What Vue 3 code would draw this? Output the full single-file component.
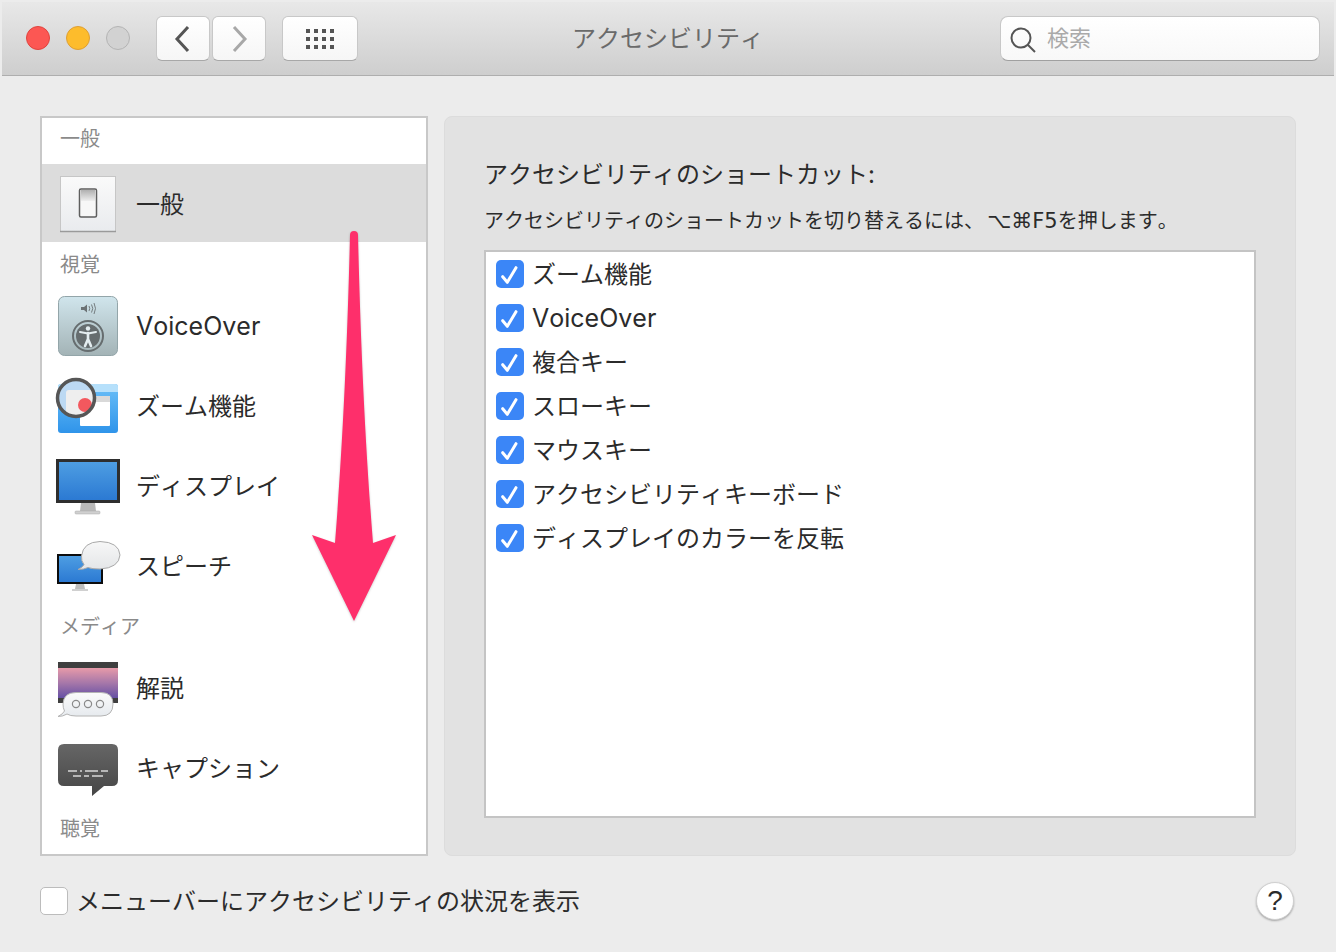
<template>
  <div class="win">
    <header class="toolbar">
      <div class="lights">
        <span class="light red"></span>
        <span class="light yellow"></span>
        <span class="light gray"></span>
      </div>
      <div class="nav">
        <div class="tbtn nav-btn">
          <svg width="20" height="30" viewBox="0 0 20 30"><path d="M15 3 L4 15 L15 27" fill="none" stroke="#555" stroke-width="3"/></svg>
        </div>
        <div class="tbtn nav-btn">
          <svg width="20" height="30" viewBox="0 0 20 30"><path d="M5 3 L16 15 L5 27" fill="none" stroke="#a8a8a8" stroke-width="3"/></svg>
        </div>
      </div>
      <div class="tbtn grid-btn">
        <div class="dots">
          <span v-for="n in 12" :key="n" class="dot"></span>
        </div>
      </div>
      <div class="title">アクセシビリティ</div>
      <div class="search">
        <svg width="28" height="28" viewBox="0 0 28 28"><circle cx="12" cy="13" r="9.5" fill="none" stroke="#555" stroke-width="2"/><path d="M19 20 L26 27" stroke="#555" stroke-width="2"/></svg>
        <span>検索</span>
      </div>
    </header>

    <main class="content">
      <aside class="sidebar">
        <template v-for="(item, i) in sidebar" :key="i">
          <div v-if="item.section" class="section" :class="item.section">{{ item.label }}</div>
          <div v-else class="row" :class="{ selected: item.selected }">
            <svg class="icon" width="68" height="68" viewBox="0 0 68 68">
              <template v-if="item.icon === 'switch'">
                <defs>
                  <linearGradient id="sw" x1="0" y1="0" x2="0" y2="1"><stop offset="0" stop-color="#fafafa"/><stop offset="1" stop-color="#e9ebee"/></linearGradient>
                  <linearGradient id="swt" x1="0" y1="0" x2="0" y2="1"><stop offset="0" stop-color="#b0b0b0"/><stop offset="1" stop-color="#eeeeee"/></linearGradient>
                </defs>
                <rect x="6.5" y="6.5" width="55" height="55" fill="url(#sw)" stroke="#c6c6c6"/>
                <path d="M6 61.5 H62" stroke="#9a9a9a" stroke-width="1.5"/>
                <rect x="25.5" y="19" width="17" height="28" rx="1.5" fill="#f7f7f7" stroke="#5e5e5e" stroke-width="1.5"/>
                <rect x="27" y="20" width="14" height="11" fill="url(#swt)"/>
              </template>
              <template v-else-if="item.icon === 'voiceover'">
                <defs><linearGradient id="vo" x1="0" y1="0" x2="0" y2="1"><stop offset="0" stop-color="#d0e5ec"/><stop offset="1" stop-color="#a3b3b6"/></linearGradient></defs>
                <rect x="4.5" y="4.5" width="59" height="59" rx="6" fill="url(#vo)" stroke="#93a5a9"/>
                <path d="M27 15 H30 L33 12.5 V20.5 L30 18 H27 Z" fill="#6b7274"/>
                <path d="M35 14 Q36.5 16.5 35 19 M37.5 12.5 Q40 16.5 37.5 20.5 M40 11 Q43 16.5 40 22" fill="none" stroke="#6b7274" stroke-width="0.9"/>
                <circle cx="34" cy="44" r="15" fill="none" stroke="#666d6f" stroke-width="2"/>
                <circle cx="34" cy="44" r="12" fill="#666d6f"/>
                <circle cx="34" cy="36.5" r="2.2" fill="#e4edf0"/>
                <path d="M26 40 L34 41.5 L42 40" fill="none" stroke="#e4edf0" stroke-width="2" stroke-linecap="round" stroke-linejoin="round"/>
                <path d="M34 41 V47 M34 47 L31 54 M34 47 L37 54" fill="none" stroke="#e4edf0" stroke-width="2.6" stroke-linecap="round"/>
              </template>
              <template v-else-if="item.icon === 'zoom'">
                <defs>
                  <linearGradient id="zm" x1="0" y1="0" x2="0" y2="1"><stop offset="0" stop-color="#6cc0f8"/><stop offset="1" stop-color="#2f94ea"/></linearGradient>
                  <clipPath id="lens"><circle cx="22" cy="26" r="18.5"/></clipPath>
                </defs>
                <rect x="4" y="12" width="60" height="49" rx="3" fill="url(#zm)"/>
                <path d="M4 20 V15 Q4 12 7 12 H61 Q64 12 64 15 V20 Z" fill="#b6e0fb"/>
                <rect x="26" y="24" width="30" height="30" rx="1" fill="#fff"/>
                <rect x="26" y="24" width="30" height="6" fill="#d9d9d9"/>
                <g clip-path="url(#lens)">
                  <circle cx="22" cy="26" r="18.5" fill="#bcd9f3"/>
                  <rect x="12" y="18" width="30" height="30" rx="3" fill="#eee"/>
                  <circle cx="31" cy="33" r="7" fill="#f3585e"/>
                </g>
                <circle cx="22" cy="26" r="18.5" fill="none" stroke="#565656" stroke-width="3.5"/>
              </template>
              <template v-else-if="item.icon === 'display'">
                <defs><linearGradient id="dp" x1="0" y1="0" x2="0" y2="1"><stop offset="0" stop-color="#4f9fe3"/><stop offset="1" stop-color="#2a78d2"/></linearGradient></defs>
                <path d="M27 51 H41 L42 59 H26 Z" fill="#b9b9b9"/>
                <rect x="21" y="59" width="25" height="3" rx="1" fill="#d0d0d0" stroke="#a8a8a8" stroke-width="0.5"/>
                <rect x="3.5" y="8.5" width="61" height="41" fill="url(#dp)" stroke="#2e2e2e" stroke-width="3"/>
              </template>
              <template v-else-if="item.icon === 'speech'">
                <defs>
                  <linearGradient id="sp" x1="0" y1="0" x2="0" y2="1"><stop offset="0" stop-color="#4f9fe3"/><stop offset="1" stop-color="#2a78d2"/></linearGradient>
                  <linearGradient id="sb" x1="0" y1="0" x2="0" y2="1"><stop offset="0" stop-color="#f7f7f7"/><stop offset="1" stop-color="#e4e6e8"/></linearGradient>
                </defs>
                <path d="M22 52 H30 L31 57 H21 Z" fill="#bdbdbd"/>
                <rect x="18" y="57" width="16" height="2" fill="#d0d0d0"/>
                <rect x="4" y="23" width="44" height="28" fill="url(#sp)" stroke="#0c0c0c" stroke-width="2"/>
                <path d="M24 37.5 Q29 35 30 32.5 Q27 29 27.5 24 Q29 10 46 9.5 Q65 10 66 23 Q65 36 46 37 Q38 37 34 35.5 Q30 37.5 24 37.5 Z" fill="url(#sb)" stroke="#a9a9a9" stroke-width="1"/>
              </template>
              <template v-else-if="item.icon === 'desc'">
                <defs>
                  <linearGradient id="ds" x1="0" y1="0" x2="0" y2="1"><stop offset="0" stop-color="#e79aa9"/><stop offset="0.5" stop-color="#a677a9"/><stop offset="1" stop-color="#6550a4"/></linearGradient>
                  <linearGradient id="db" x1="0" y1="0" x2="0" y2="1"><stop offset="0" stop-color="#fbfbfb"/><stop offset="1" stop-color="#e6eaee"/></linearGradient>
                </defs>
                <rect x="4" y="8" width="60" height="41" fill="#3f3f3f"/>
                <rect x="4" y="14" width="60" height="30" fill="url(#ds)"/>
                <path d="M4 62.5 Q9 60 10.5 57 Q9 54 9 50 Q9.5 38.5 22 38.5 H47 Q59 38.5 59 50 Q59 62 47 62 H22 Q16 62 13 60 Q9 62.5 4 62.5 Z" fill="url(#db)" stroke="#b4b4b4" stroke-width="1"/>
                <circle cx="22" cy="50" r="3.6" fill="none" stroke="#8a8a8a" stroke-width="1.2"/>
                <circle cx="34" cy="50" r="3.6" fill="none" stroke="#8a8a8a" stroke-width="1.2"/>
                <circle cx="46" cy="50" r="3.6" fill="none" stroke="#8a8a8a" stroke-width="1.2"/>
              </template>
              <template v-else-if="item.icon === 'caption'">
                <defs><linearGradient id="cp" x1="0" y1="0" x2="0" y2="1"><stop offset="0" stop-color="#666"/><stop offset="1" stop-color="#464646"/></linearGradient></defs>
                <path d="M10 10 H58 Q64 10 64 16 V46 Q64 52 58 52 H50 L38 62 V52 H10 Q4 52 4 46 V16 Q4 10 10 10 Z" fill="url(#cp)"/>
                <path d="M14 37 H23 M26 37 H28 M31 37 H44 M47 37 H54 M19 42 H27 M30 42 H35 M38 42 H49" stroke="#d8d8d8" stroke-width="1.4"/>
              </template>
            </svg>
            <span class="row-label" :class="{ latin: item.latin }">{{ item.label }}</span>
          </div>
        </template>
      </aside>

      <section class="panel">
        <h2>アクセシビリティのショートカット:</h2>
        <p>アクセシビリティのショートカットを切り替えるには、<span class="keys">⌥⌘F5</span>を押します。</p>
        <div class="list">
          <div v-for="s in shortcuts" :key="s.label" class="check-row">
            <span class="check">
              <svg width="28" height="28" viewBox="0 0 28 28"><path d="M6.7 16.7 L11.3 22.3 L20 7.7" fill="none" stroke="#fff" stroke-width="3" stroke-linecap="round" stroke-linejoin="round"/></svg>
            </span>
            <span class="row-label" :class="{ latin: s.latin }">{{ s.label }}</span>
          </div>
        </div>
      </section>
    </main>

    <footer class="foot">
      <div class="menu-opt"><span class="empty-check"></span><span class="row-label">メニューバーにアクセシビリティの状況を表示</span></div>
      <div class="help">?</div>
    </footer>

    <!-- annotation drawn over the screenshot -->
    <svg class="arrow" width="1336" height="952" viewBox="0 0 1336 952">
      <path d="M350 235 Q350 231 354 231 Q358 231 358 235 C360 320 364 430 373 543 L396 535 L354 621 L312 535 L335 543 C344 430 348 320 350 235 Z" fill="#fe2f6b"/>
    </svg>
  </div>
</template>

<script setup>
const sidebar = [
  { label: '一般', section: 'first' },
  { label: '一般', icon: 'switch', selected: true },
  { label: '視覚', section: 'normal' },
  { label: 'VoiceOver', icon: 'voiceover', latin: true },
  { label: 'ズーム機能', icon: 'zoom' },
  { label: 'ディスプレイ', icon: 'display' },
  { label: 'スピーチ', icon: 'speech' },
  { label: 'メディア', section: 'tight' },
  { label: '解説', icon: 'desc' },
  { label: 'キャプション', icon: 'caption' },
  { label: '聴覚', section: 'last' }
]

const shortcuts = [
  { label: 'ズーム機能' },
  { label: 'VoiceOver', latin: true },
  { label: '複合キー' },
  { label: 'スローキー' },
  { label: 'マウスキー' },
  { label: 'アクセシビリティキーボード' },
  { label: 'ディスプレイのカラーを反転' }
]
</script>

<style>
html, body { margin: 0; background: #ececec; }
</style>

<style scoped>
.win {
  position: relative;
  width: 1336px;
  height: 952px;
  overflow: hidden;
  background: #ececec;
  color: #2b2b2b;
  font-family: Inter, "Noto Sans CJK JP", "DejaVu Sans", sans-serif;
  font-kerning: none;
}

.toolbar {
  display: flex;
  align-items: flex-start;
  box-sizing: border-box;
  height: 74px;
  margin: 2px 2px 0;
  padding: 14px 0 0 24px;
  background: linear-gradient(#e8e8e8, #cecece);
  border-bottom: 1px solid #aeaeae;
}
.lights { display: flex; gap: 16px; margin-top: 10px; }
.light { width: 24px; height: 24px; border-radius: 50%; box-sizing: border-box; }
.red { background: #fc5753; border: 1px solid #e0443e; }
.yellow { background: #fdbc2c; border: 1px solid #de9f34; }
.gray { background: #d2d2d2; border: 1px solid #b4b4b4; }

.tbtn {
  display: flex;
  align-items: center;
  justify-content: center;
  height: 45px;
  box-sizing: border-box;
  background: linear-gradient(#fff, #f6f6f6);
  border: 1px solid #c8c8c8;
  border-bottom-color: #a8a8a8;
  border-radius: 6px;
}
.nav { display: flex; gap: 2px; margin-left: 26px; }
.nav-btn { width: 54px; }
.grid-btn { width: 76px; margin-left: 16px; }
.dots {
  display: grid;
  grid-template-columns: repeat(4, 4px);
  grid-auto-rows: 4px;
  gap: 4px;
}
.dot { display: block; background: #555; }

.title {
  position: absolute;
  left: 0;
  right: 0;
  top: 23px;
  text-align: center;
  font-size: 24px;
  line-height: 32px;
  color: #6a6a6a;
}
.search {
  display: flex;
  align-items: center;
  width: 320px;
  height: 45px;
  margin-left: auto;
  margin-right: 14px;
  padding-left: 8px;
  box-sizing: border-box;
  background: linear-gradient(#fff, #f8f8f8);
  border: 1px solid #c8c8c8;
  border-bottom-color: #a0a0a0;
  border-radius: 8px;
  font-size: 22px;
  color: #aaa;
  position: relative;
}
.search span { margin-left: 10px; padding-bottom: 5px; }

.content {
  display: grid;
  grid-template-columns: 388px 852px;
  gap: 16px;
  height: 740px;
  margin: 40px 40px 0;
}

.sidebar {
  box-sizing: border-box;
  height: 740px;
  overflow: hidden;
  background: #fff;
  border: 2px solid #c8c8c8;
}
.section {
  display: flex;
  align-items: center;
  box-sizing: border-box;
  height: 44px;
  padding: 0 0 2px 18px;
  font-size: 20px;
  color: #8a8a8a;
}
.section.first { height: 46px; padding-bottom: 8px; }
.section.tight { height: 42px; padding-bottom: 3px; }
.section.last { padding-bottom: 6px; }
.row {
  display: flex;
  align-items: center;
  height: 80px;
  padding-left: 12px;
  font-size: 24px;
}
.row.selected { box-sizing: border-box; height: 78px; padding-top: 2px; background: #dcdcdc; }
.row > .row-label { margin-left: 14px; }
.row-label { padding-bottom: 3px; }
.row-label.latin { padding-bottom: 0; font-size: 25px; }
.icon { flex: none; }

.panel {
  display: flex;
  flex-direction: column;
  box-sizing: border-box;
  height: 740px;
  padding: 42px 39px 37px;
  background: #e2e2e2;
  border: 1px solid #dcdcdc;
  border-radius: 8px;
}
.panel h2 {
  margin: 0;
  font-size: 24px;
  font-weight: 400;
  line-height: 32px;
}
.panel p {
  margin: 16px 0 0;
  font-size: 20px;
  line-height: 28px;
}
.keys {
  margin-left: 3px;
  font-family: "DejaVu Sans", Inter, sans-serif;
  font-size: 21px;
}
.list {
  flex: 1;
  margin-top: 15px;
  background: #fff;
  border: 2px solid #c4c4c4;
}
.check-row {
  display: flex;
  align-items: center;
  gap: 8px;
  height: 44px;
  padding-left: 10px;
  font-size: 24px;
}
.check {
  display: block;
  width: 28px;
  height: 28px;
  border-radius: 5px;
  background: #3b86f7;
}
.check svg { display: block; }

.foot {
  display: flex;
  align-items: center;
  justify-content: space-between;
  height: 90px;
  margin: 0 40px;
}
.menu-opt { display: flex; align-items: center; gap: 8px; font-size: 24px; }
.empty-check {
  width: 28px;
  height: 28px;
  box-sizing: border-box;
  background: #fff;
  border: 1px solid #bcbcbc;
  border-radius: 5px;
}
.help {
  width: 38px;
  height: 38px;
  margin-right: 2px;
  box-sizing: border-box;
  background: #fff;
  border: 1px solid #d0d0d0;
  border-radius: 50%;
  box-shadow: 0 1px 2px rgba(0, 0, 0, 0.3);
  font: 28px/36px "Liberation Sans", sans-serif;
  text-align: center;
  color: #2b2b2b;
}

.arrow {
  position: absolute;
  left: 0;
  top: 0;
  pointer-events: none;
  filter: drop-shadow(0 1px 1px rgba(0, 0, 0, 0.2));
}
</style>
